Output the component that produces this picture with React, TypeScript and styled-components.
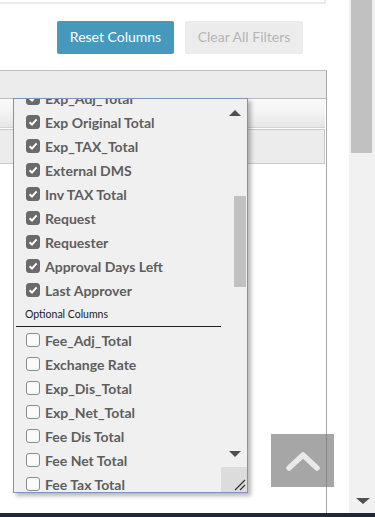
import React, { useLayoutEffect, useRef } from "react";
import styled, { createGlobalStyle } from "styled-components";

const Global = createGlobalStyle`
  html, body { margin: 0; padding: 0; background: #fff; }
  body { font-family: Lato, "Open Sans", "Liberation Sans", sans-serif; overflow: hidden; }
  * { box-sizing: border-box; }
`;

const Page = styled.div`
  width: 375px;
  height: 517px;
  display: flex;
  flex-direction: column;
`;

const Body = styled.div`
  flex: 1;
  display: flex;
  min-height: 0;
`;

const Main = styled.div`
  position: relative;
  width: 349px;
  display: flex;
  flex-direction: column;
`;

const TopPanel = styled.div`
  width: 326px;
  height: 4px;
  border-right: 2px solid #ebebeb;
  border-bottom: 2px solid #ebebeb;
`;

const Toolbar = styled.div`
  width: 303px;
  margin-top: 17px;
  display: flex;
  justify-content: flex-end;
  gap: 11px;
`;

const Button = styled.button<{ $primary?: boolean }>`
  height: 33px;
  width: ${(p) => (p.$primary ? 117 : 118)}px;
  border: none;
  border-radius: 2px;
  font-family: inherit;
  font-size: 14px;
  padding: 0 0 2px;
  background: ${(p) => (p.$primary ? "#4599bd" : "#ececec")};
  color: ${(p) => (p.$primary ? "#ffffff" : "#b5b5b5")};
`;

const Grid = styled.div`
  margin-top: 16px;
  width: 327px;
  flex: 1;
  border-right: 1px solid #a9a9a9;
  display: flex;
  flex-direction: column;
`;

const HeaderRow = styled.div`
  height: 29px;
  background: #ececec;
  border-top: 1px solid #bdbdbd;
  border-bottom: 1px solid #bdbdbd;
`;

const SubRow = styled.div`
  height: 29px;
  width: 325px;
  background: linear-gradient(#f9f9f9, #f5f5f5 40%, #e6e6e6);
  border-bottom: 1px solid #d2d2d2;
`;

const FilterRow = styled.div`
  margin-top: 1px;
  height: 35px;
  width: 325px;
  background: #ececec;
  border: 1px solid #c9c9c9;
  border-left: none;
`;

const Dropdown = styled.div`
  position: absolute;
  left: 13px;
  top: 98px;
  width: 235px;
  height: 395px;
  background: #f0f0f0;
  border: 1px solid #7f93bd;
  box-shadow: 3px 3px 4px rgba(0, 0, 0, 0.28);
  display: flex;
`;

const List = styled.div`
  flex: 1;
  overflow: hidden;
`;

const Item = styled.div`
  height: 24px;
  display: flex;
  align-items: center;
  gap: 5px;
  padding-left: 12px;
  font-size: 14px;
  font-weight: 700;
  color: #5e5e5e;
  white-space: nowrap;
`;

const Box = styled.span<{ $checked: boolean }>`
  width: 14px;
  height: 14px;
  border-radius: 3px;
  flex: none;
  display: flex;
  align-items: center;
  justify-content: center;
  background: ${(p) => (p.$checked ? "#6a6a6a" : "#fafafa")};
  border: 1px solid ${(p) => (p.$checked ? "#6a6a6a" : "#8a8a8a")};
`;

const GroupHeader = styled.div`
  padding-top: 5px;
  padding-bottom: 1px;
`;

const GroupLabel = styled.div`
  padding-left: 11px;
  font-size: 10.5px;
  line-height: 14px;
  color: #222;
`;

const GroupRule = styled.div`
  margin-top: 5px;
  margin-left: 2px;
  width: 205px;
  height: 1px;
  background: #222;
`;

const ScrollCol = styled.div`
  width: 26px;
  display: flex;
  flex-direction: column;
  align-items: flex-end;
`;

const ArrowBtn = styled.div<{ $down?: boolean }>`
  width: 26px;
  height: ${(p) => (p.$down ? 20 : 17)}px;
  display: flex;
  justify-content: flex-start;
  padding-left: 8px;
  align-items: ${(p) => (p.$down ? "flex-start" : "flex-end")};
  padding-top: ${(p) => (p.$down ? 4 : 0)}px;
  &::after {
    content: "";
    width: 0;
    height: 0;
    border-left: 6px solid transparent;
    border-right: 6px solid transparent;
    ${(p) =>
      p.$down ? "border-top: 6px solid #4f4f4f;" : "border-bottom: 6px solid #4f4f4f;"}
  }
`;

const InnerTrack = styled.div`
  flex: 1;
  width: 26px;
  display: flex;
  flex-direction: column;
  align-items: flex-end;
  padding-right: 1px;
`;

const InnerThumb = styled.div`
  margin-top: 80px;
  width: 12px;
  height: 91px;
  background: #c1c1c1;
`;

const Grip = styled.div`
  width: 26px;
  height: 25px;
  background: #dcdcdc;
  display: flex;
  align-items: flex-end;
  justify-content: flex-end;
`;

const Scrollbar = styled.div`
  width: 26px;
  background: #f1f1f1;
  display: flex;
  flex-direction: column;
  align-items: center;
`;

const PageThumb = styled.div`
  width: 21px;
  margin-left: -2px;
  height: 153px;
  background: #c1c1c1;
`;

const PageArrow = styled.div`
  margin-top: auto;
  margin-bottom: 9px;
  margin-left: 1px;
  width: 0;
  height: 0;
  border-left: 7px solid transparent;
  border-right: 7px solid transparent;
  border-top: 6px solid #505050;
`;

const Footer = styled.div`
  height: 4px;
  background: #1d2a39;
`;

const BackToTop = styled.div`
  position: absolute;
  left: 271px;
  top: 434px;
  width: 63px;
  height: 53px;
  background: rgba(112, 112, 112, 0.62);
  display: flex;
  align-items: center;
  justify-content: center;
`;

const Check = () => (
  <svg width="10" height="10" viewBox="0 0 10 10">
    <path d="M1.6 5.2 L4 7.6 L8.6 2.4" fill="none" stroke="#fff" strokeWidth="2" />
  </svg>
);

const selected = [
  "Exp_Adj_Total",
  "Exp Original Total",
  "Exp_TAX_Total",
  "External DMS",
  "Inv TAX Total",
  "Request",
  "Requester",
  "Approval Days Left",
  "Last Approver",
];

const optional = [
  "Fee_Adj_Total",
  "Exchange Rate",
  "Exp_Dis_Total",
  "Exp_Net_Total",
  "Fee Dis Total",
  "Fee Net Total",
  "Fee Tax Total",
];

export default function App() {
  const listRef = useRef<HTMLDivElement>(null);
  useLayoutEffect(() => {
    if (listRef.current) listRef.current.scrollTop = 13;
  }, []);
  return (
    <Page>
      <Global />
      <Body>
        <Main>
          <TopPanel />
          <Toolbar>
            <Button $primary>Reset Columns</Button>
            <Button>Clear All Filters</Button>
          </Toolbar>
          <Grid>
            <HeaderRow />
            <SubRow />
            <FilterRow />
          </Grid>
          <Dropdown>
            <List ref={listRef}>
              {selected.map((t) => (
                <Item key={t}>
                  <Box $checked>
                    <Check />
                  </Box>
                  {t}
                </Item>
              ))}
              <GroupHeader>
                <GroupLabel>Optional Columns</GroupLabel>
                <GroupRule />
              </GroupHeader>
              {optional.map((t) => (
                <Item key={t}>
                  <Box $checked={false} />
                  {t}
                </Item>
              ))}
            </List>
            <ScrollCol>
              <ArrowBtn />
              <InnerTrack>
                <InnerThumb />
              </InnerTrack>
              <ArrowBtn $down />
              <Grip>
                <svg width="14" height="14" viewBox="0 0 14 14">
                  <path d="M2 12 L12 2 M7 12 L12 7" stroke="#333" strokeWidth="1.2" />
                </svg>
              </Grip>
            </ScrollCol>
          </Dropdown>
          <BackToTop>
            <svg width="36" height="22" viewBox="0 0 36 22">
              <path
                d="M4 18 L18 5 L32 18"
                fill="none"
                stroke="#e9e9e9"
                strokeWidth="5.5"
                strokeLinecap="round"
                strokeLinejoin="round"
              />
            </svg>
          </BackToTop>
        </Main>
        <Scrollbar>
          <PageThumb />
          <PageArrow />
        </Scrollbar>
      </Body>
      <Footer />
    </Page>
  );
}
